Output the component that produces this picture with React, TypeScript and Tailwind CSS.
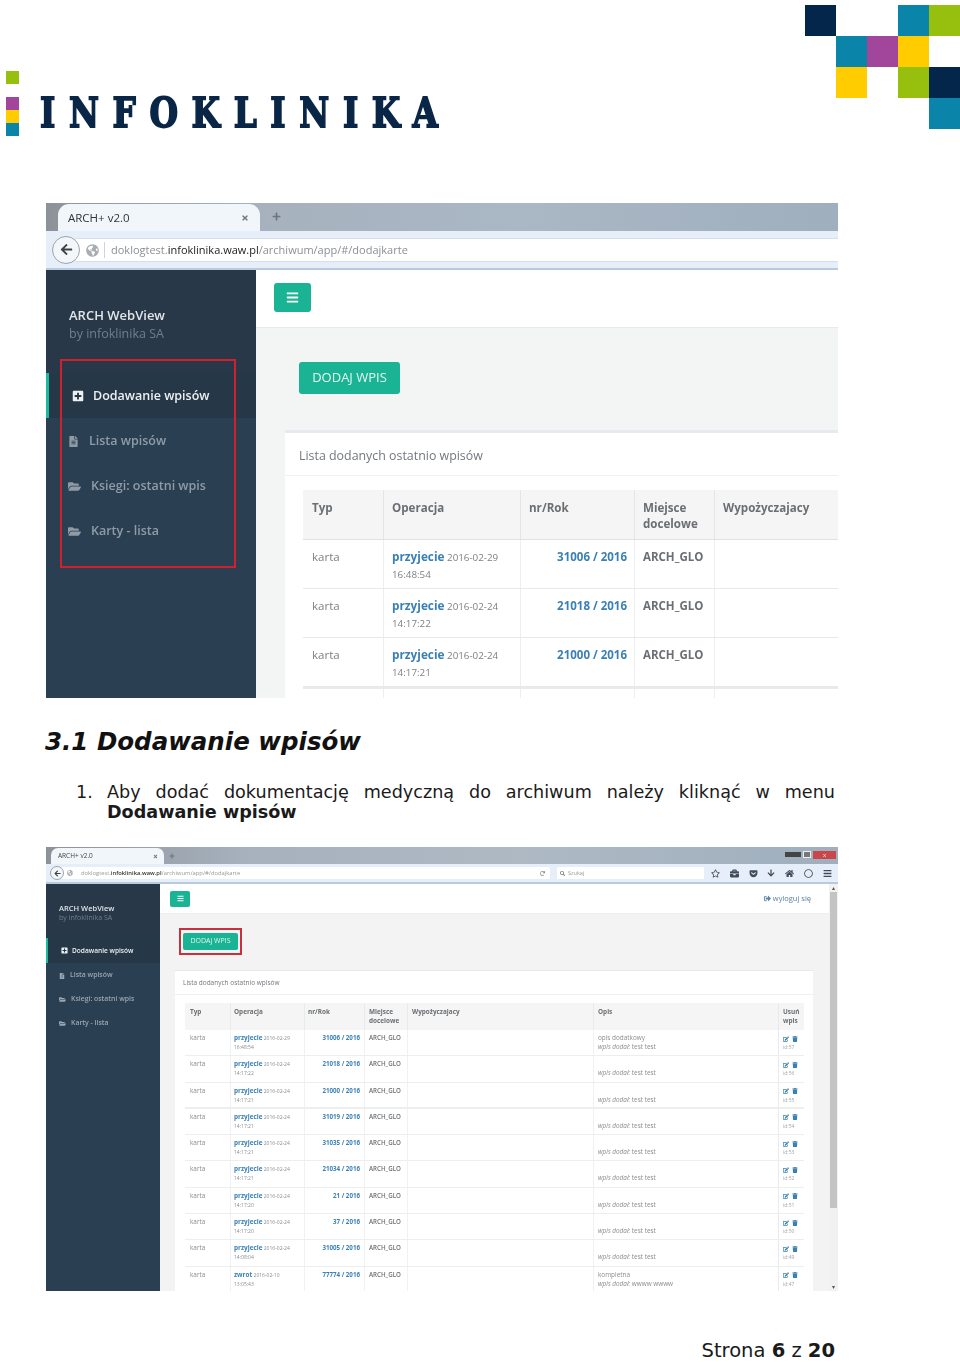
import React from "react";
import {
  FaPlusSquare, FaFileAlt, FaFolderOpen, FaBars, FaArrowLeft, FaGlobeAmericas, FaTimes, FaPlus,
  FaEdit, FaTrash, FaSignOutAlt, FaRegStar, FaBriefcase, FaGetPocket, FaArrowDown, FaHome, FaRegCircle, FaSearch, FaRedo,
} from "react-icons/fa";

const rows1 = [
  { d: "2016-02-29", t: "16:48:54", n: "31006 / 2016" },
  { d: "2016-02-24", t: "14:17:22", n: "21018 / 2016" },
  { d: "2016-02-24", t: "14:17:21", n: "21000 / 2016" },
];

const rows2 = [
  { op: "przyjecie", d: "2016-02-29", t: "16:48:54", n: "31006 / 2016", o: "opis dodatkowy", w: "test test", id: "id:57" },
  { op: "przyjecie", d: "2016-02-24", t: "14:17:22", n: "21018 / 2016", o: "", w: "test test", id: "id:56" },
  { op: "przyjecie", d: "2016-02-24", t: "14:17:21", n: "21000 / 2016", o: "", w: "test test", id: "id:55" },
  { op: "przyjecie", d: "2016-02-24", t: "14:17:21", n: "31019 / 2016", o: "", w: "test test", id: "id:54" },
  { op: "przyjecie", d: "2016-02-24", t: "14:17:21", n: "31035 / 2016", o: "", w: "test test", id: "id:53" },
  { op: "przyjecie", d: "2016-02-24", t: "14:17:21", n: "21034 / 2016", o: "", w: "test test", id: "id:52" },
  { op: "przyjecie", d: "2016-02-24", t: "14:17:20", n: "21 / 2016", o: "", w: "test test", id: "id:51" },
  { op: "przyjecie", d: "2016-02-24", t: "14:17:20", n: "37 / 2016", o: "", w: "test test", id: "id:50" },
  { op: "przyjecie", d: "2016-02-24", t: "14:08:04", n: "31005 / 2016", o: "", w: "test test", id: "id:49" },
  { op: "zwrot", d: "2016-02-10", t: "13:05:43", n: "77774 / 2016", o: "kompletna", w: "wwww wwww", id: "id:47" },
];

function Mosaic() {
  const cells: [number, number, string][] = [
    [0, 0, "#03264a"], [93, 0, "#0a84a8"], [124, 0, "#97bf0d"],
    [31, 31, "#0a84a8"], [62, 31, "#a2469b"], [93, 31, "#ffcc00"],
    [31, 62, "#ffcc00"], [93, 62, "#97bf0d"], [124, 62, "#03264a"],
    [124, 93, "#0a84a8"],
  ];
  return (
    <svg width="155" height="124" viewBox="0 0 155 124" className="block">
      {cells.map(([x, y, c]) => (
        <rect key={`${x}-${y}`} x={x} y={y} width="31" height="31" fill={c} />
      ))}
    </svg>
  );
}

function Logo() {
  return (
    <div className="flex items-start">
      <div className="flex flex-col w-[13px]">
        <div className="h-[13px] bg-[#97bf0d] mb-[13px]" />
        <div className="h-[13px] bg-[#a2469b]" />
        <div className="h-[13px] bg-[#ffcc00]" />
        <div className="h-[13px] bg-[#0a84a8]" />
      </div>
      <div className="ml-[21px] mt-[18px] h-[48px] w-[420px] overflow-visible whitespace-nowrap origin-left scale-x-[0.8] font-['DejaVu_Serif',serif] font-bold text-[41px] leading-[48px] tracking-[17px] text-[#0a2647] [-webkit-text-stroke:1.8px_#0a2647]">
        INFOKLINIKA
      </div>
    </div>
  );
}

function SideItem1({ icon, label }: { icon: React.ReactNode; label: string }) {
  return (
    <div className="flex items-center h-[45px] pl-[22px] pt-[1px] text-[12.5px] font-semibold text-[#8f9ca8]">
      {icon}
      <span>{label}</span>
    </div>
  );
}

function Shot1() {
  return (
    <div className="ml-[46px] w-[792px] h-[495px] overflow-hidden relative font-['Open_Sans',sans-serif] bg-white blur-[0.3px]">
      <div className="h-[28px] flex items-end bg-[linear-gradient(90deg,#8d9299_0%,#a6b1bd_25%,#aab7c5_60%,#9fafbe_100%)]">
        <div className="ml-[12px] w-[202px] h-[27px] bg-[#f1f6fb] rounded-t-[11px] flex items-center pl-[10px] pr-[11px] pt-[1px] text-[11.5px] text-[#333]">
          <span>ARCH+ v2.0</span>
          <FaTimes className="ml-auto text-[8px] text-[#777]" />
        </div>
        <FaPlus className="ml-[12px] mb-[10px] text-[9px] text-[#6d747c]" />
      </div>
      <div className="h-[39px] bg-[#e6eff9] border-b-2 border-[#b9c9de] flex items-center">
        <div className="z-10 ml-[6px] w-[28px] h-[28px] rounded-full bg-[#f4f7fa] border border-[#9aa5ae] flex items-center justify-center shrink-0">
          <FaArrowLeft className="text-[13px] text-[#3b444c]" />
        </div>
        <div className="-ml-[4px] mt-[1px] flex-1 h-[24px] bg-white flex items-center pl-[10px] text-[11px] text-[#8b8f94] border-y border-[#d5deea]">
          <FaGlobeAmericas className="text-[13px] text-[#a9adb1] mr-[5px]" />
          <span className="w-px h-[16px] bg-[#cfd4da] mr-[6px]" />
          <span>doklogtest.<span className="text-[#222]">infoklinika.waw.pl</span>/archiwum/app/#/dodajkarte</span>
        </div>
      </div>
      <div className="flex h-[428px]">
        <div className="w-[210px] bg-[#2b3f52] shrink-0">
          <div className="h-[103px] pt-[36px] pl-[23px] bg-[#283848]">
            <div className="text-[13px] leading-[18px] font-semibold text-[#e1e6ea]">ARCH WebView</div>
            <div className="text-[12.5px] leading-[19px] text-[#6e7f8f]">by infoklinika SA</div>
          </div>
          <div className="h-[45px] border-l-[3px] border-[#1abb9c] bg-[#263747] flex items-center pl-[23px] pt-[1px] text-[12.5px] font-semibold text-[#ecf0f3]">
            <FaPlusSquare className="text-[12px] mr-[9px]" />
            <span>Dodawanie wpisów</span>
          </div>
          <SideItem1 icon={<FaFileAlt className="text-[11px] mr-[10px]" />} label="Lista wpisów" />
          <SideItem1 icon={<FaFolderOpen className="text-[13px] mr-[10px]" />} label="Ksiegi: ostatni wpis" />
          <SideItem1 icon={<FaFolderOpen className="text-[13px] mr-[10px]" />} label="Karty - lista" />
        </div>
        <div className="flex-1 bg-[#f3f4f4] min-w-0">
          <div className="h-[58px] bg-white border-b border-[#e6e9ed] pl-[18px] pt-[13px]">
            <div className="w-[37px] h-[29px] bg-[#1ab394] rounded-[3px] flex items-center justify-center">
              <FaBars className="text-[13px] text-white" />
            </div>
          </div>
          <div className="ml-[43px] mt-[34px] w-[101px] h-[32px] bg-[#1ab394] rounded-[3px] flex items-center justify-center text-[13px] text-[#e6f7f3]">
            DODAJ WPIS
          </div>
          <div className="ml-[29px] mt-[36px] border-t-[3px] border-[#e6e9ed] bg-white h-[270px]">
            <div className="h-[43px] border-b border-[#eef0f2] pl-[14px] pt-[5px] flex items-center text-[12.4px] text-[#73787d]">
              Lista dodanych ostatnio wpisów
            </div>
            <div className="ml-[18px] mt-[14px]">
              <div className="grid grid-cols-[81px_137px_114px_80px_1fr] h-[50px] bg-[#f5f5f5] border-b border-[#dfe2e5] text-[11.6px] leading-[16px] font-bold text-[#6b6f73]">
                <div className="pl-[9px] pt-[10px] border-r border-[#e3e5e7]">Typ</div>
                <div className="pl-[8px] pt-[10px] border-r border-[#e3e5e7]">Operacja</div>
                <div className="pl-[8px] pt-[10px] border-r border-[#e3e5e7]">nr/Rok</div>
                <div className="pl-[8px] pt-[10px] border-r border-[#e3e5e7]">Miejsce<br />docelowe</div>
                <div className="pl-[8px] pt-[10px]">Wypożyczajacy</div>
              </div>
              {rows1.map((r) => (
                <div key={r.n} className="grid grid-cols-[81px_137px_114px_80px_1fr] h-[49px] border-b border-[#e6e8ea] text-[11.5px] leading-[17px] text-[#7d8185]">
                  <div className="pl-[9px] pt-[8px] border-r border-[#eceef0]">karta</div>
                  <div className="pl-[8px] pt-[8px] border-r border-[#eceef0] text-[9.8px]">
                    <span className="text-[11.8px] font-bold text-[#3a80b5]">przyjecie</span> {r.d}<br />{r.t}
                  </div>
                  <div className="pr-[7px] pt-[8px] text-right font-bold text-[#3a80b5] border-r border-[#eceef0]">{r.n}</div>
                  <div className="pl-[8px] pt-[8px] font-bold text-[#6b6f73] border-r border-[#eceef0]">ARCH_GLO</div>
                  <div />
                </div>
              ))}
              <div className="grid grid-cols-[81px_137px_114px_80px_1fr] h-[11px] border-t-2 border-[#e8eaec]">
                <div className="border-r border-[#eceef0]" />
                <div className="border-r border-[#eceef0]" />
                <div className="border-r border-[#eceef0]" />
                <div className="border-r border-[#eceef0]" />
                <div />
              </div>
            </div>
          </div>
        </div>
      </div>
      <div className="absolute left-[14px] top-[156px] w-[176px] h-[209px] border-2 border-[#d0202e]" />
    </div>
  );
}

function SideItem2({ icon, label }: { icon: React.ReactNode; label: string }) {
  return (
    <div className="h-[24px] flex items-center pl-[13px] pt-[1px] text-[6.9px] font-semibold text-[#9aa6b1]">
      {icon}
      <span>{label}</span>
    </div>
  );
}

function Shot2() {
  const cols = "grid-cols-[46px_74px_60px_43px_186px_185px_25px]";
  return (
    <div className="ml-[46px] w-[792px] h-[444px] overflow-hidden relative font-['Open_Sans',sans-serif] bg-white blur-[0.5px]">
      <div className="h-[17px] flex items-end bg-[linear-gradient(90deg,#8d9299_0%,#a6b1bd_25%,#aeb9c4_60%,#9fafbe_100%)]">
        <div className="ml-[5px] w-[113px] h-[16px] bg-[#f1f6fb] rounded-t-[7px] flex items-center pl-[7px] pr-[6px] text-[6.5px] text-[#444]">
          <span>ARCH+ v2.0</span>
          <FaTimes className="ml-auto text-[5px] text-[#777]" />
        </div>
        <FaPlus className="ml-[5px] mb-[5px] text-[6px] text-[#6d747c]" />
        <div className="ml-auto mb-[5px] mr-[2px] w-[51px] h-[9px] flex items-center">
          <div className="w-[16px] h-[5px] bg-[#444] mr-[2px]" />
          <div className="w-[8px] h-[7px] border border-[#eee] bg-[#777] mr-[2px]" />
          <div className="flex-1 h-[8px] bg-[#c9474a] flex items-center justify-center text-[6px] text-white leading-none">x</div>
        </div>
      </div>
      <div className="h-[20px] bg-[#e6eff9] border-b-2 border-[#b9c9de] flex items-center">
        <div className="z-10 ml-[4px] w-[14px] h-[14px] rounded-full bg-[#f4f7fa] border border-[#9aa5ae] flex items-center justify-center shrink-0">
          <FaArrowLeft className="text-[7px] text-[#3b444c]" />
        </div>
        <div className="-ml-[2px] w-[488px] h-[12px] bg-white flex items-center pl-[5px] pr-[5px] text-[5.8px] text-[#999]">
          <FaGlobeAmericas className="text-[6px] text-[#a9adb1] mr-[8px]" />
          <span>doklogtest.<span className="text-[#333] font-semibold">infoklinika.waw.pl</span>/archiwum/app/#/dodajkarte</span>
          <FaRedo className="ml-auto text-[5px] text-[#888]" />
        </div>
        <div className="ml-[7px] w-[147px] h-[12px] bg-white flex items-center pl-[3px] text-[5.5px] text-[#999]">
          <FaSearch className="text-[5px] text-[#777] mr-[3px]" />
          <span>Szukaj</span>
        </div>
        <div className="flex-1 flex items-center justify-between pl-[7px] pr-[6px] text-[#3f4d5a] text-[9px]">
          <FaRegStar />
          <FaBriefcase />
          <FaGetPocket />
          <FaArrowDown className="text-[8px]" />
          <FaHome />
          <FaRegCircle />
          <FaBars />
        </div>
      </div>
      <div className="flex h-[407px]">
        <div className="w-[114px] bg-[#2b3f52] shrink-0">
          <div className="h-[54px] pt-[20px] pl-[13px] bg-[#283848]">
            <div className="text-[7.5px] leading-[9px] font-semibold text-[#dfe4e8]">ARCH WebView</div>
            <div className="text-[7px] leading-[9px] text-[#6e7f8f]">by infoklinika SA</div>
          </div>
          <div className="h-[25px] border-l-2 border-[#1abb9c] bg-[#263747] flex items-center pl-[13px] text-[6.6px] font-semibold text-[#ecf0f3]">
            <FaPlusSquare className="text-[7px] mr-[4px]" />
            <span>Dodawanie wpisów</span>
          </div>
          <SideItem2 icon={<FaFileAlt className="text-[6px] mr-[5px]" />} label="Lista wpisów" />
          <SideItem2 icon={<FaFolderOpen className="text-[7px] mr-[5px]" />} label="Ksiegi: ostatni wpis" />
          <SideItem2 icon={<FaFolderOpen className="text-[7px] mr-[5px]" />} label="Karty - lista" />
        </div>
        <div className="flex-1 flex min-w-0">
          <div className="flex-1 bg-[#f3f3f3] min-w-0">
            <div className="h-[30px] bg-white flex items-center pl-[10px] pr-[18px] border-b border-[#eceef0]">
              <div className="w-[20px] h-[16px] bg-[#1ab394] rounded-[2px] flex items-center justify-center">
                <FaBars className="text-[7px] text-white" />
              </div>
              <div className="ml-auto flex items-center text-[7.5px] text-[#5a84a8]">
                <FaSignOutAlt className="text-[7px] mr-[2px]" />
                <span>wyloguj się</span>
              </div>
            </div>
            <div className="ml-[23px] mt-[19px] w-[55px] h-[17px] bg-[#1ab394] rounded-[2px] flex items-center justify-center text-[7px] text-[#e6f7f3]">
              DODAJ WPIS
            </div>
            <div className="ml-[15px] mr-[16px] mt-[20px] border-t border-[#e6e9ed] bg-white h-[321px]">
              <div className="h-[24px] border-b border-[#eef0f2] pl-[8px] flex items-center text-[6.5px] text-[#73787d]">
                Lista dodanych ostatnio wpisów
              </div>
              <div className="ml-[10px] mt-[8px] w-[619px]">
                <div className={`grid ${cols} h-[27px] bg-[#f5f5f5] text-[6.4px] leading-[9px] font-bold text-[#6b6f73]`}>
                  <div className="pl-[5px] pt-[4px] border-r border-[#e8eaec]">Typ</div>
                  <div className="pl-[3px] pt-[4px] border-r border-[#e8eaec]">Operacja</div>
                  <div className="pl-[3px] pt-[4px] border-r border-[#e8eaec]">nr/Rok</div>
                  <div className="pl-[4px] pt-[4px] border-r border-[#e8eaec]">Miejsce<br />docelowe</div>
                  <div className="pl-[4px] pt-[4px] border-r border-[#e8eaec]">Wypożyczajacy</div>
                  <div className="pl-[4px] pt-[4px] border-r border-[#e8eaec]">Opis</div>
                  <div className="pl-[4px] pt-[4px]">Usuń<br />wpis</div>
                </div>
                {rows2.map((r, i) => (
                  <div key={r.id} className={`grid ${cols} h-[26.3px] border-b border-[#eceef0] text-[6.4px] leading-[9px] text-[#888c90] ${i === 2 ? "border-b-2" : ""}`}>
                    <div className="pl-[5px] pt-[3px] border-r border-[#f0f1f3]">karta</div>
                    <div className="pl-[3px] pt-[3px] border-r border-[#f0f1f3] text-[5px]">
                      <span className="text-[6.4px] font-bold text-[#3a80b5]">{r.op}</span> {r.d}<br />{r.t}
                    </div>
                    <div className="pr-[4px] pt-[3px] text-right font-bold text-[#3a80b5] text-[6.2px] border-r border-[#f0f1f3]">{r.n}</div>
                    <div className="pl-[4px] pt-[3px] font-semibold text-[#6b6f73] text-[6.2px] border-r border-[#f0f1f3]">ARCH_GLO</div>
                    <div className="border-r border-[#f0f1f3]" />
                    <div className="pl-[4px] pt-[3px] border-r border-[#e8eaec]">
                      <div className="h-[9px]">{r.o}</div>
                      <div><i>wpis dodał:</i> {r.w}</div>
                    </div>
                    <div className="pl-[4px] pt-[4px] text-[5px] leading-[8px] text-[#a0a4a8]">
                      <div className="flex gap-[3px] text-[6px] text-[#3a80b5] h-[9px] items-center">
                        <FaEdit />
                        <FaTrash />
                      </div>
                      <div>{r.id}</div>
                    </div>
                  </div>
                ))}
              </div>
            </div>
          </div>
          <div className="w-[9px] bg-[#f1f1f1] shrink-0 flex flex-col">
            <div className="h-[8px] text-[6px] leading-[8px] text-center text-[#555]">▴</div>
            <div className="h-[316px] bg-[#c4c4c4] mx-[1px]" />
            <div className="mt-auto h-[8px] text-[6px] leading-[8px] text-center text-[#555]">▾</div>
          </div>
        </div>
      </div>
      <div className="absolute left-[133px] top-[81px] w-[63px] h-[27px] border-2 border-[#c8303c]" />
    </div>
  );
}

export default function App() {
  return (
    <div className="w-[960px] h-[1362px] bg-white font-['DejaVu_Sans',sans-serif] text-[#1a1a1a]">
      <header className="h-[203px] flex justify-between pl-[6px]">
        <div className="mt-[71px]">
          <Logo />
        </div>
        <div className="mt-[5px]">
          <Mosaic />
        </div>
      </header>
      <Shot1 />
      <h1 className="mt-[27px] ml-[45px] h-[34px] leading-[34px] text-[24.5px] font-bold italic text-[#111]">3.1 Dodawanie wpisów</h1>
      <div className="mt-[23px] ml-[76px] w-[759px] flex text-[17.6px] leading-[20px]">
        <span className="w-[31px] shrink-0">1.</span>
        <div className="flex-1">
          <div className="[text-align-last:justify]">Aby dodać dokumentację medyczną do archiwum należy kliknąć w menu</div>
          <div className="font-bold">Dodawanie wpisów</div>
        </div>
      </div>
      <div className="mt-[25px]">
        <Shot2 />
      </div>
      <div className="mt-[49px] mr-[125px] text-right text-[19.5px] leading-[22px]">
        Strona <b>6</b> z <b>20</b>
      </div>
    </div>
  );
}
